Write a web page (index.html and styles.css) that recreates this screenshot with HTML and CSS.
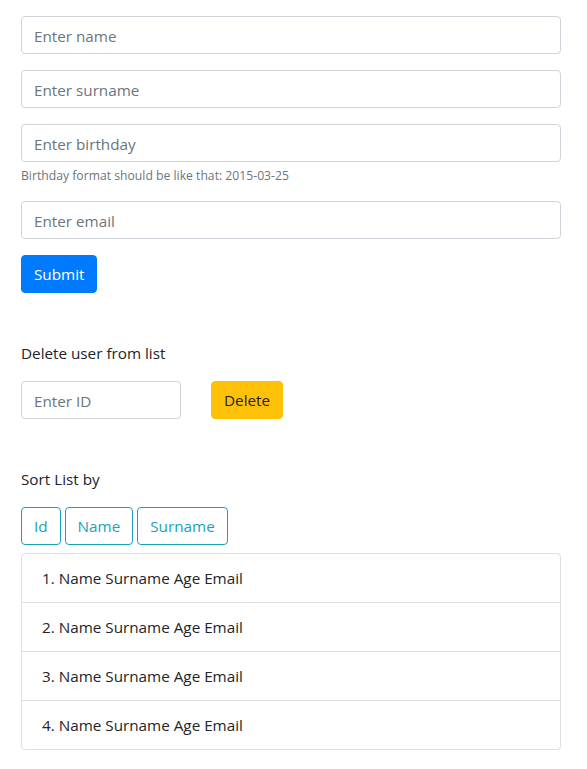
FILE: index.html
```html
<!DOCTYPE html>
<html lang="en">
<head>
<meta charset="utf-8">
<title>Users</title>
<link rel="stylesheet" href="styles.css">
</head>
<body>
<main class="container">
  <form class="user-form">
    <div class="form-group">
      <input class="form-control" type="text" placeholder="Enter name">
    </div>
    <div class="form-group">
      <input class="form-control" type="text" placeholder="Enter surname">
    </div>
    <div class="form-group">
      <input class="form-control" type="text" placeholder="Enter birthday">
      <small class="form-text">Birthday format should be like that: 2015-03-25</small>
    </div>
    <div class="form-group">
      <input class="form-control" type="email" placeholder="Enter email">
    </div>
    <button type="button" class="btn btn-primary">Submit</button>
  </form>

  <section class="delete-section">
    <p class="section-label">Delete user from list</p>
    <div class="delete-row">
      <input class="form-control id-input" type="text" placeholder="Enter ID">
      <button type="button" class="btn btn-warning">Delete</button>
    </div>
  </section>

  <section class="sort-section">
    <p class="section-label">Sort List by</p>
    <div class="sort-buttons">
      <button type="button" class="btn btn-outline-info">Id</button>
      <button type="button" class="btn btn-outline-info">Name</button>
      <button type="button" class="btn btn-outline-info">Surname</button>
    </div>
    <ul class="list-group">
      <li class="list-group-item">1. Name Surname Age Email</li>
      <li class="list-group-item">2. Name Surname Age Email</li>
      <li class="list-group-item">3. Name Surname Age Email</li>
      <li class="list-group-item">4. Name Surname Age Email</li>
    </ul>
  </section>
</main>
</body>
</html>
```

FILE: styles.css
```css
* { box-sizing: border-box; }

html, body {
  margin: 0;
  padding: 0;
  background: #fff;
}

body {
  font-family: "Open Sans", "Noto Sans", "Liberation Sans", sans-serif;
  font-size: 15.25px;
  line-height: 24px;
  color: #212529;
}

.container {
  padding: 16px 26px 0 21px;
  width: 587px;
}

.user-form {
  display: flex;
  flex-direction: column;
  align-items: flex-start;
}

.form-group {
  width: 100%;
  margin-bottom: 16px;
}

.form-control {
  display: block;
  width: 100%;
  height: 38px;
  padding: 7px 12px 5px;
  font: inherit;
  line-height: 24px;
  color: #495057;
  background: #fff;
  border: 1px solid #ced4da;
  border-radius: 4px;
  outline: none;
}

.form-control::placeholder {
  color: #6c757d;
  opacity: 1;
}

.form-text {
  display: block;
  margin-top: 4px;
  font-size: 12.2px;
  line-height: 19px;
  color: #6c757d;
}

.btn {
  display: inline-block;
  height: 38px;
  padding: 6px 12px;
  font: inherit;
  line-height: 24px;
  border: 1px solid transparent;
  border-radius: 4px;
  background: transparent;
  cursor: pointer;
}

.btn-primary {
  color: #fff;
  background: #007bff;
  border-color: #007bff;
}

.btn-warning {
  color: #212529;
  background: #ffc107;
  border-color: #ffc107;
}

.btn-outline-info {
  color: #17a2b8;
  border-color: #17a2b8;
}

.section-label {
  margin: 0 0 16px;
  height: 24px;
}

.delete-section {
  margin-top: 48px;
}

.delete-row {
  display: flex;
  gap: 30px;
}

.id-input {
  width: 160px;
}

.sort-section {
  margin-top: 48px;
}

.sort-buttons {
  display: flex;
  gap: 4px;
  margin-bottom: 8px;
}

.list-group {
  list-style: none;
  margin: 0;
  padding: 0;
  border: 1px solid rgba(0, 0, 0, 0.125);
  border-radius: 4px;
}

.list-group-item {
  padding: 12px 20px;
  border-top: 1px solid rgba(0, 0, 0, 0.125);
}

.list-group-item:first-child {
  border-top: none;
}
```
